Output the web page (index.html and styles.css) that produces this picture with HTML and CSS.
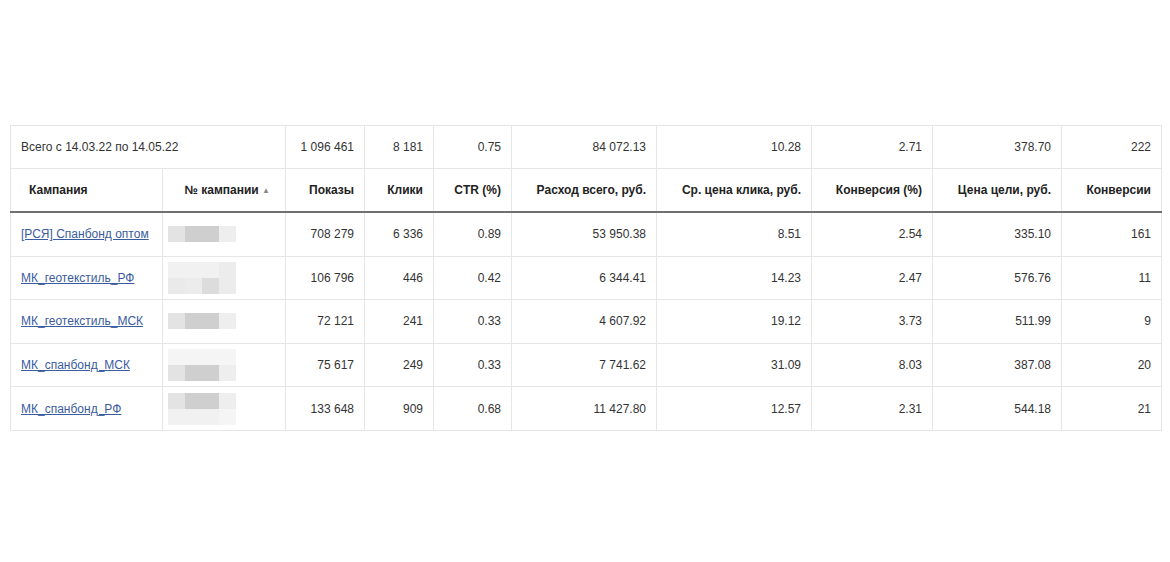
FILE: index.html
```html
<!DOCTYPE html>
<html lang="ru">
<head>
<meta charset="utf-8">
<link rel="stylesheet" href="styles.css">
<title>Статистика кампаний</title>
</head>
<body>
<div class="page">
<table class="stats">
  <colgroup>
    <col class="c1"><col class="c2"><col class="c3"><col class="c4"><col class="c5">
    <col class="c6"><col class="c7"><col class="c8"><col class="c9"><col class="c10">
  </colgroup>
  <tbody>
    <tr class="total">
      <td colspan="2" class="txt">Всего с 14.03.22 по 14.05.22</td>
      <td>1 096 461</td>
      <td>8 181</td>
      <td>0.75</td>
      <td>84 072.13</td>
      <td>10.28</td>
      <td>2.71</td>
      <td>378.70</td>
      <td>222</td>
    </tr>
    <tr class="head">
      <th class="first">Кампания</th>
      <th class="sorted">№ кампании <span class="arrow">▲</span></th>
      <th>Показы</th>
      <th>Клики</th>
      <th>CTR (%)</th>
      <th>Расход всего, руб.</th>
      <th>Ср. цена клика, руб.</th>
      <th>Конверсия (%)</th>
      <th>Цена цели, руб.</th>
      <th>Конверсии</th>
    </tr>
    <tr class="row">
      <td class="txt"><a href="#">[РСЯ] Спанбонд оптом</a></td>
      <td class="blur"><div class="mosaic"><i class="a"></i><i class="b"></i><i class="b"></i><i class="c"></i></div></td>
      <td>708 279</td><td>6 336</td><td>0.89</td><td>53 950.38</td><td>8.51</td><td>2.54</td><td>335.10</td><td>161</td>
    </tr>
    <tr class="row">
      <td class="txt"><a href="#">МК_геотекстиль_РФ</a></td>
      <td class="blur"><div class="mosaic"><i class="d"></i><i class="d"></i><i class="d"></i><i class="e"></i><i class="a2"></i><i class="e"></i><i class="f"></i><i class="e"></i></div></td>
      <td>106 796</td><td>446</td><td>0.42</td><td>6 344.41</td><td>14.23</td><td>2.47</td><td>576.76</td><td>11</td>
    </tr>
    <tr class="row">
      <td class="txt"><a href="#">МК_геотекстиль_МСК</a></td>
      <td class="blur"><div class="mosaic"><i class="a"></i><i class="b"></i><i class="b"></i><i class="c"></i></div></td>
      <td>72 121</td><td>241</td><td>0.33</td><td>4 607.92</td><td>19.12</td><td>3.73</td><td>511.99</td><td>9</td>
    </tr>
    <tr class="row">
      <td class="txt"><a href="#">МК_спанбонд_МСК</a></td>
      <td class="blur"><div class="mosaic"><i class="g"></i><i class="g"></i><i class="g"></i><i class="g"></i><i class="a"></i><i class="b"></i><i class="b"></i><i class="c"></i></div></td>
      <td>75 617</td><td>249</td><td>0.33</td><td>7 741.62</td><td>31.09</td><td>8.03</td><td>387.08</td><td>20</td>
    </tr>
    <tr class="row">
      <td class="txt"><a href="#">МК_спанбонд_РФ</a></td>
      <td class="blur"><div class="mosaic"><i class="a"></i><i class="b"></i><i class="b"></i><i class="c"></i><i class="d"></i><i class="d"></i><i class="d"></i><i class="g"></i></div></td>
      <td>133 648</td><td>909</td><td>0.68</td><td>11 427.80</td><td>12.57</td><td>2.31</td><td>544.18</td><td>21</td>
    </tr>
  </tbody>
</table>
</div>
</body>
</html>
```
FILE: styles.css
```css
html, body {
  margin: 0;
  padding: 0;
  background: #ffffff;
}
.page {
  padding: 125px 9px 0 10px;
  font-family: "Liberation Sans", Arial, sans-serif;
  font-size: 12px;
  color: #333333;
}
.stats {
  border-collapse: collapse;
  table-layout: fixed;
  width: 1151px;
}
.c1 { width: 152px; }
.c2 { width: 123px; }
.c3 { width: 79px; }
.c4 { width: 69px; }
.c5 { width: 78px; }
.c6 { width: 145px; }
.c7 { width: 155px; }
.c8 { width: 121px; }
.c9 { width: 129px; }
.c10 { width: 100px; }

.stats td, .stats th {
  border: 1px solid #e6e6e6;
  text-align: right;
  padding: 0 10px 0 10px;
  height: 42px;
  white-space: nowrap;
  vertical-align: middle;
}
.stats .row td {
  height: 42.6px;
}
.stats td.txt {
  text-align: left;
}
.stats .head th {
  font-weight: bold;
  color: #222222;
  border-bottom: 2px solid #707070;
  height: 42px;
}
.stats .head th.first {
  text-align: left;
  padding-left: 18px;
}
.stats .head th.sorted {
  padding-right: 15px;
}
.arrow {
  font-size: 8px;
  color: #8a8a8a;
  vertical-align: 1px;
}
.stats a {
  color: #3a5b9e;
  text-decoration: underline;
}
.stats td.blur {
  padding: 0 0 0 5px;
  text-align: left;
}
.mosaic {
  display: grid;
  grid-template-columns: repeat(4, 17px);
  grid-auto-rows: 16px;
  width: 68px;
  filter: blur(0.6px);
}
.mosaic i { display: block; }
.mosaic .a { background: #e3e3e3; }
.mosaic .a2 { background: #eaeaea; }
.mosaic .b { background: #cfcfcf; }
.mosaic .c { background: #eeeeee; }
.mosaic .d { background: #f1f1f1; }
.mosaic .e { background: #ececec; }
.mosaic .f { background: #dcdcdc; }
.mosaic .g { background: #f5f5f5; }
```
